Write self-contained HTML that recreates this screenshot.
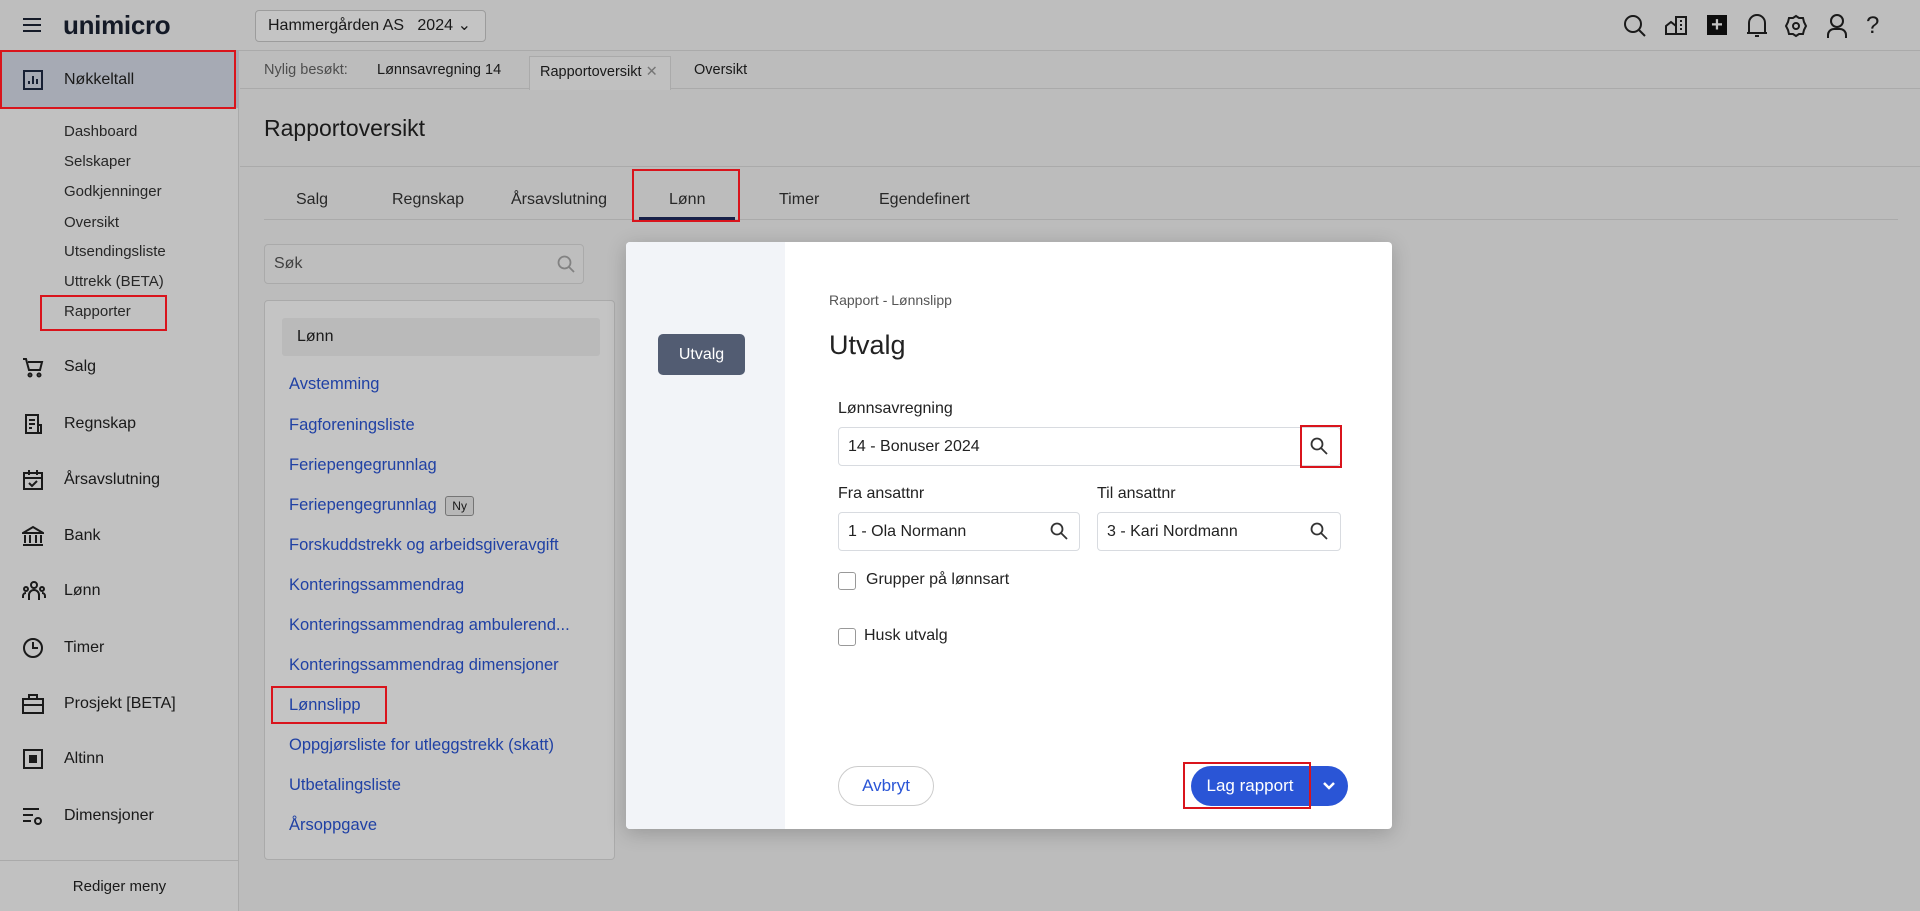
<!DOCTYPE html>
<html><head><meta charset="utf-8">
<style>
*{box-sizing:border-box;margin:0;padding:0}
body{width:1920px;height:911px;overflow:hidden;font-family:"Liberation Sans",sans-serif;background:#f5f5f5;position:relative;color:#222}
.abs{position:absolute}
.top{left:0;top:0;width:1920px;height:51px;background:#f8f8f8;border-bottom:1px solid #ddd}
.side{left:0;top:51px;width:239px;height:860px;background:#fbfbfb;border-right:1px solid #ddd}
.side .sel{left:0;top:0;width:239px;height:57px;background:#d9deea}
.side .t{position:absolute;font-size:16px;color:#222}
.side .s{position:absolute;left:64px;font-size:15px;color:#333}
.side svg{position:absolute;left:22px}
.main{left:240px;top:51px;width:1680px;height:860px;background:#f5f5f5}
.tabs a{position:absolute;top:191px;font-size:16px;color:#333}
.link{position:absolute;left:289px;font-size:16.5px;color:#2a55d6}
.overlay{left:0;top:0;width:1920px;height:911px;background:rgba(0,0,0,0.23)}
.modal{left:626px;top:242px;width:766px;height:587px;background:#fff;border-radius:4px;box-shadow:0 4px 20px rgba(0,0,0,.2);overflow:hidden}
.inp{position:absolute;height:39px;border:1px solid #d8dbe0;border-radius:4px;background:#fff;font-size:16px;color:#222;padding:10px 9px}
.lbl{position:absolute;font-size:16px;color:#222}
.red{position:absolute;border:2px solid #d9141c}
.cb{position:absolute;width:18px;height:18px;border:1.5px solid #999;border-radius:3px;background:#fff}
</style></head><body>
<div class="abs top">
 <svg class="abs" style="left:22px;top:16px" width="20" height="18"><path d="M1 3h18M1 9h18M1 15h18" stroke="#1d2536" stroke-width="2"/></svg>
 <div class="abs" style="left:63px;top:10px;font-size:26px;font-weight:600;color:#1b2233;letter-spacing:-0.3px">unimicro</div>
 <div class="abs" style="left:255px;top:10px;width:231px;height:32px;border:1px solid #ccc;border-radius:4px;background:#fff;font-size:16px;padding:6px 12px;color:#222">Hammergården AS&nbsp;&nbsp; 2024 <span style="position:absolute;right:14px;top:4px">⌄</span></div>
 <svg class="abs" style="left:1622px;top:13px" width="26" height="26" fill="none" stroke="#222" stroke-width="2"><circle cx="11" cy="11" r="8"/><path d="M17 17l6 6"/></svg>
 <svg class="abs" style="left:1664px;top:14px" width="24" height="22" fill="none" stroke="#222" stroke-width="2"><path d="M2 20V12l5-4 5 4v8H2zM12 20V3h10v17z"/><path d="M16 7h2M16 11h2M16 15h2" /></svg>
 <div class="abs" style="left:1707px;top:15px;width:20px;height:20px;background:#111;color:#fff;font-weight:bold;font-size:20px;line-height:20px;text-align:center">+</div>
 <svg class="abs" style="left:1745px;top:12px" width="24" height="28" fill="none" stroke="#222" stroke-width="2"><path d="M4 21V11a8 8 0 0116 0v10zM2 21h20"/><path d="M10 24h4"/></svg>
 <svg class="abs" style="left:1784px;top:14px" width="24" height="24" fill="none" stroke="#222" stroke-width="2"><path d="M12 2l3 2 4 0 1 4 2 4-2 4-1 4-4 0-3 2-3-2-4 0-1-4-2-4 2-4 1-4 4 0z"/><circle cx="12" cy="12" r="3"/></svg>
 <svg class="abs" style="left:1826px;top:13px" width="22" height="26" fill="none" stroke="#222" stroke-width="2"><circle cx="11" cy="8" r="6"/><path d="M2 25v-3a6 6 0 016-6h6a6 6 0 016 6v3"/></svg>
 <div class="abs" style="left:1866px;top:12px;font-size:24px;color:#222">?</div>
</div>
<div class="abs side">
 <div class="abs sel"></div>
 <svg style="top:18px" width="22" height="22" fill="none" stroke="#1f2a44" stroke-width="2"><rect x="2" y="2" width="18" height="18"/><path d="M7 15v-3M11 15V7M15 15v-5"/></svg>
 <div class="t" style="left:64px;top:20px">Nøkkeltall</div>
 <div class="s" style="top:72px">Dashboard</div>
 <div class="s" style="top:102px">Selskaper</div>
 <div class="s" style="top:132px">Godkjenninger</div>
 <div class="s" style="top:163px">Oversikt</div>
 <div class="s" style="top:192px">Utsendingsliste</div>
 <div class="s" style="top:222px">Uttrekk (BETA)</div>
 <div class="s" style="top:252px">Rapporter</div>
 <svg style="top:305px" width="22" height="22" fill="none" stroke="#222" stroke-width="2"><path d="M1 3h3l3 11h11l2-8H6"/><circle cx="8" cy="19" r="1.5"/><circle cx="17" cy="19" r="1.5"/></svg>
 <div class="t" style="left:64px;top:307px">Salg</div>
 <svg style="top:362px" width="22" height="22" fill="none" stroke="#222" stroke-width="2"><path d="M4 2h12v18H4zM7 7h6M7 11h6M7 15h3M16 12h3v8h-3"/></svg>
 <div class="t" style="left:64px;top:364px">Regnskap</div>
 <svg style="top:418px" width="22" height="22" fill="none" stroke="#222" stroke-width="2"><rect x="2" y="4" width="18" height="16"/><path d="M2 9h18M7 1v5M15 1v5M7 14l3 3 5-5"/></svg>
 <div class="t" style="left:64px;top:420px">Årsavslutning</div>
 <svg style="top:474px" width="22" height="22" fill="none" stroke="#222" stroke-width="2"><path d="M1 8l10-6 10 6zM3 10v8M8 10v8M14 10v8M19 10v8M1 20h20"/></svg>
 <div class="t" style="left:64px;top:476px">Bank</div>
 <svg style="top:529px" width="24" height="22" fill="none" stroke="#222" stroke-width="2"><circle cx="12" cy="5" r="3"/><circle cx="4" cy="9" r="2"/><circle cx="20" cy="9" r="2"/><path d="M7 20v-5a5 5 0 0110 0v5M1 18v-2a3 3 0 013-3M23 18v-2a3 3 0 00-3-3"/></svg>
 <div class="t" style="left:64px;top:531px">Lønn</div>
 <svg style="top:586px" width="22" height="22" fill="none" stroke="#222" stroke-width="2"><circle cx="11" cy="11" r="9"/><path d="M11 5v6h5"/></svg>
 <div class="t" style="left:64px;top:588px">Timer</div>
 <svg style="top:642px" width="22" height="22" fill="none" stroke="#222" stroke-width="2"><rect x="1" y="6" width="20" height="14"/><path d="M7 6V2h8v4M1 12h20"/></svg>
 <div class="t" style="left:64px;top:644px">Prosjekt [BETA]</div>
 <svg style="top:697px" width="22" height="22" fill="none" stroke="#222" stroke-width="2"><rect x="2" y="2" width="18" height="18"/><rect x="8" y="8" width="6" height="6" fill="#222"/></svg>
 <div class="t" style="left:64px;top:699px">Altinn</div>
 <svg style="top:754px" width="22" height="22" fill="none" stroke="#222" stroke-width="2"><path d="M1 4h16M1 10h10M1 16h8"/><circle cx="16" cy="16" r="3"/></svg>
 <div class="t" style="left:64px;top:756px">Dimensjoner</div>
 <div class="abs" style="left:0;top:809px;width:239px;border-top:1px solid #ddd"></div>
 <div class="t" style="left:0;width:239px;text-align:center;top:827px;font-size:15px">Rediger meny</div>
</div>
<div class="abs main"></div>
<div class="abs" style="left:240px;top:51px;width:1680px;height:38px;border-bottom:1px solid #ddd;background:#f5f5f5"></div>
<div class="abs" style="left:264px;top:62px;font-size:14.5px;color:#666">Nylig besøkt:</div>
<div class="abs" style="left:377px;top:62px;font-size:14.5px;color:#222">Lønnsavregning 14</div>
<div class="abs" style="left:529px;top:56px;width:142px;height:34px;border:1px solid #ddd;border-bottom:none;background:#fafafa;font-size:14.5px;padding:7px 10px">Rapportoversikt <span style="color:#999">✕</span></div>
<div class="abs" style="left:694px;top:62px;font-size:14.5px">Oversikt</div>
<div class="abs" style="left:264px;top:115px;font-size:23px;color:#222">Rapportoversikt</div>
<div class="abs" style="left:240px;top:166px;width:1680px;border-top:1px solid #ddd"></div>
<div class="tabs">
 <a style="left:296px">Salg</a><a style="left:392px">Regnskap</a><a style="left:511px">Årsavslutning</a><a style="left:669px">Lønn</a><a style="left:779px">Timer</a><a style="left:879px">Egendefinert</a>
</div>
<div class="abs" style="left:264px;top:219px;width:1634px;border-top:1px solid #ddd"></div>
<div class="abs" style="left:639px;top:217px;width:96px;height:3px;background:#1f2a5e"></div>
<div class="abs" style="left:264px;top:244px;width:320px;height:40px;border:1px solid #ddd;border-radius:4px;background:#f8f8f8;font-size:16px;color:#555;padding:10px 9px">Søk
 <svg style="position:absolute;right:8px;top:10px" width="18" height="18" fill="none" stroke="#aaa" stroke-width="1.8"><circle cx="7.5" cy="7.5" r="6"/><path d="M12 12l5 5"/></svg></div>
<div class="abs" style="left:264px;top:300px;width:351px;height:560px;border:1px solid #ddd;border-radius:4px;background:#fff"></div>
<div class="abs" style="left:282px;top:318px;width:318px;height:38px;background:#f2f2f2;border-radius:3px;font-size:16px;padding:10px 15px">Lønn</div>
<div class="link" style="top:375px">Avstemming</div>
<div class="link" style="top:416px">Fagforeningsliste</div>
<div class="link" style="top:456px">Feriepengegrunnlag</div>
<div class="link" style="top:496px">Feriepengegrunnlag <span style="display:inline-block;font-size:12px;color:#222;border:1px solid #999;border-radius:3px;padding:2px 6px;margin-left:4px;background:#eee">Ny</span></div>
<div class="link" style="top:536px">Forskuddstrekk og arbeidsgiveravgift</div>
<div class="link" style="top:576px">Konteringssammendrag</div>
<div class="link" style="top:616px">Konteringssammendrag ambulerend...</div>
<div class="link" style="top:656px">Konteringssammendrag dimensjoner</div>
<div class="link" style="top:696px">Lønnslipp</div>
<div class="link" style="top:736px">Oppgjørsliste for utleggstrekk (skatt)</div>
<div class="link" style="top:776px">Utbetalingsliste</div>
<div class="link" style="top:816px">Årsoppgave</div>

<div class="abs overlay"></div>

<div class="abs modal">
 <div class="abs" style="left:0;top:0;width:159px;height:587px;background:#f2f4f8"></div>
 <div class="abs" style="left:32px;top:92px;width:87px;height:41px;background:#525c72;border-radius:5px;color:#fff;font-size:16px;text-align:center;line-height:41px">Utvalg</div>
 <div class="lbl" style="left:203px;top:50px;font-size:14px;color:#555">Rapport - Lønnslipp</div>
 <div class="lbl" style="left:203px;top:88px;font-size:27px">Utvalg</div>
 <div class="lbl" style="left:212px;top:158px">Lønnsavregning</div>
 <div class="inp" style="left:212px;top:185px;width:503px">14 - Bonuser 2024</div>
 <div class="lbl" style="left:212px;top:243px">Fra ansattnr</div>
 <div class="lbl" style="left:471px;top:243px">Til ansattnr</div>
 <div class="inp" style="left:212px;top:270px;width:242px">1 - Ola Normann</div>
 <div class="inp" style="left:471px;top:270px;width:244px">3 - Kari Nordmann</div>
 <svg class="abs" style="left:684px;top:195px" width="18" height="18" fill="none" stroke="#333" stroke-width="1.8"><circle cx="7" cy="7" r="5.5"/><path d="M11 11l6 6"/></svg>
 <svg class="abs" style="left:424px;top:280px" width="18" height="18" fill="none" stroke="#333" stroke-width="1.8"><circle cx="7" cy="7" r="5.5"/><path d="M11 11l6 6"/></svg>
 <svg class="abs" style="left:684px;top:280px" width="18" height="18" fill="none" stroke="#333" stroke-width="1.8"><circle cx="7" cy="7" r="5.5"/><path d="M11 11l6 6"/></svg>
 <div class="cb" style="left:212px;top:330px"></div>
 <div class="lbl" style="left:240px;top:329px">Grupper på lønnsart</div>
 <div class="cb" style="left:212px;top:386px"></div>
 <div class="lbl" style="left:238px;top:385px">Husk utvalg</div>
 <div class="abs" style="left:212px;top:524px;width:96px;height:40px;border:1px solid #ccc;border-radius:20px;color:#2a55d6;font-size:17px;text-align:center;line-height:38px">Avbryt</div>
 <div class="abs" style="left:565px;top:524px;width:157px;height:40px;border-radius:20px;background:#2a55d6"></div>
 <div class="abs" style="left:565px;top:524px;width:118px;height:40px;color:#fff;font-size:17px;text-align:center;line-height:40px">Lag rapport</div>
 <div class="abs" style="left:683px;top:524px;width:1px;height:40px;background:#4a70e0"></div>
 <svg class="abs" style="left:696px;top:538px" width="14" height="12" fill="none" stroke="#fff" stroke-width="2.5"><path d="M2 3l5 5 5-5"/></svg>
</div>

<div class="red" style="left:0;top:50px;width:236px;height:59px"></div>
<div class="red" style="left:40px;top:295px;width:127px;height:36px"></div>
<div class="red" style="left:632px;top:169px;width:108px;height:53px"></div>
<div class="red" style="left:271px;top:686px;width:116px;height:38px"></div>
<div class="red" style="left:1300px;top:425px;width:42px;height:43px"></div>
<div class="red" style="left:1183px;top:762px;width:128px;height:47px"></div>
</body></html>
